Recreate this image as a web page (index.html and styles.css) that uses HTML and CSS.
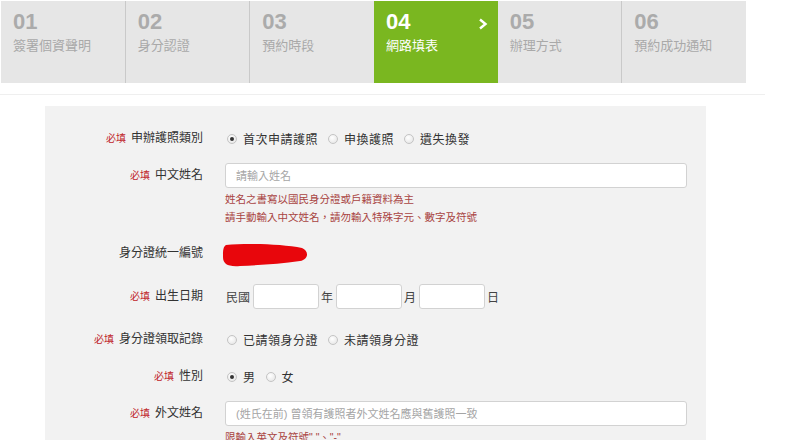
FILE: index.html
```html
<!DOCTYPE html>
<html lang="zh-Hant">
<head>
    <meta charset="UTF-8">
    <meta name="viewport" content="width=device-width, initial-scale=1.0">
    <title>網路填表</title>
    <link rel="stylesheet" href="styles.css">
</head>
<body>

    <div class="steps">
        <div class="step">
            <div class="step-no">01</div>
            <div class="step-name">簽署個資聲明</div>
        </div>
        <div class="step">
            <div class="step-no">02</div>
            <div class="step-name">身分認證</div>
        </div>
        <div class="step">
            <div class="step-no">03</div>
            <div class="step-name">預約時段</div>
        </div>
        <div class="step active">
            <div class="step-no">04</div>
            <div class="step-name">網路填表</div>
            <svg class="step-arrow" width="10" height="12" viewBox="0 0 10 12">
                <polyline points="2,1.5 7.5,6 2,10.5" fill="none" stroke="#fff" stroke-width="2.4"/>
            </svg>
        </div>
        <div class="step">
            <div class="step-no">05</div>
            <div class="step-name">辦理方式</div>
        </div>
        <div class="step">
            <div class="step-no">06</div>
            <div class="step-name">預約成功通知</div>
        </div>
    </div>

    <div class="divider"></div>

    <div class="panel">
        <div class="row">
            <div class="label"><span class="req">必填</span>申辦護照類別</div>
            <div class="field">
                <span class="radio checked"></span><span class="opt">首次申請護照</span>
                <span class="radio"></span><span class="opt">申換護照</span>
                <span class="radio"></span><span class="opt">遺失換發</span>
            </div>
        </div>

        <div class="row top with-hint">
            <div class="label label-input"><span class="req">必填</span>中文姓名</div>
            <div class="field-col">
                <input class="text-input" type="text" placeholder="請輸入姓名">
                <div class="hint">姓名之書寫以國民身分證或戶籍資料為主</div>
                <div class="hint">請手動輸入中文姓名，請勿輸入特殊字元、數字及符號</div>
            </div>
        </div>

        <div class="row wide">
            <div class="label">身分證統一編號</div>
            <div class="field">
                <!-- masked id number -->
                <svg class="blot" width="86" height="24" viewBox="0 0 86 24">
                    <path d="M4 2 C 25 0, 60 1, 80 5 C 87 8, 87 16, 78 18 C 58 21, 38 22, 18 23 C 6 24, 1 21, 1 14 C 1 8, 1 4, 4 2 Z" fill="#e8060c"/>
                </svg>
            </div>
        </div>

        <div class="row wide">
            <div class="label"><span class="req">必填</span>出生日期</div>
            <div class="field">
                <span class="unit first">民國</span>
                <input class="date-input" type="text">
                <span class="unit">年</span>
                <input class="date-input" type="text">
                <span class="unit">月</span>
                <input class="date-input" type="text">
                <span class="unit">日</span>
            </div>
        </div>

        <div class="row">
            <div class="label"><span class="req">必填</span>身分證領取記錄</div>
            <div class="field">
                <span class="radio"></span><span class="opt">已請領身分證</span>
                <span class="radio"></span><span class="opt">未請領身分證</span>
            </div>
        </div>

        <div class="row">
            <div class="label"><span class="req">必填</span>性別</div>
            <div class="field">
                <span class="radio checked"></span><span class="opt">男</span>
                <span class="radio"></span><span class="opt">女</span>
            </div>
        </div>

        <div class="row top">
            <div class="label label-input"><span class="req">必填</span>外文姓名</div>
            <div class="field-col">
                <input class="text-input" type="text" placeholder="(姓氏在前) 曾領有護照者外文姓名應與舊護照一致">
                <div class="hint">限輸入英文及符號" "、"-"</div>
            </div>
        </div>
    </div>

</body>
</html>
```

FILE: styles.css
```css
body {
    margin: 0;
    padding: 0;
    background-color: #fff;
    font-family: "Liberation Sans", "Noto Sans CJK TC", sans-serif;
    color: #333;
}
.steps {
    display: flex;
    width: 745px;
    margin: 1px 0 0 1px;
}
.step {
    position: relative;
    flex: 1;
    height: 82px;
    padding: 10px 0 0 12px;
    box-sizing: border-box;
    background-color: #e6e6e6;
    border-left: 1px solid #c9c9c9;
}
.step:first-child,
.step.active,
.step.active + .step {
    border-left: none;
}
.step-no {
    font-size: 22px;
    line-height: 22px;
    font-weight: bold;
    color: #ababab;
}
.step-name {
    margin-top: 4px;
    font-size: 13px;
    line-height: 18px;
    color: #a9a9a9;
}
.step.active {
    background-color: #7ab720;
}
.step.active .step-no,
.step.active .step-name {
    color: #fff;
}
.step-arrow {
    position: absolute;
    top: 17px;
    right: 10px;
}
.divider {
    width: 765px;
    height: 1px;
    margin-top: 11px;
    background-color: #efefef;
}
.panel {
    width: 661px;
    height: 360px;
    margin: 11px 0 0 45px;
    padding-top: 20px;
    box-sizing: border-box;
    background-color: #f2f2f2;
}
.row {
    display: flex;
    align-items: center;
    margin-bottom: 12px;
}
.row.top {
    align-items: flex-start;
}
.row.wide {
    margin-bottom: 18px;
}
.row.with-hint {
    margin-bottom: 15px;
}
.label {
    width: 158px;
    flex-shrink: 0;
    text-align: right;
    font-size: 12px;
    line-height: 25px;
    color: #333;
}
.req {
    font-size: 10px;
    color: #c0262b;
    margin-right: 5px;
}
.field {
    display: flex;
    align-items: center;
    height: 25px;
    margin-left: 22px;
    font-size: 12px;
}
.field-col {
    margin-left: 22px;
}
.radio {
    width: 8px;
    height: 8px;
    border: 1px solid #c4c4c4;
    border-radius: 50%;
    background: radial-gradient(circle at 40% 35%, #fff, #e2e2e2);
    margin: 0 6px 0 2px;
    display: flex;
    align-items: center;
    justify-content: center;
}
.radio.checked::after {
    content: "";
    width: 4px;
    height: 4px;
    border-radius: 50%;
    background-color: #333;
}
.opt {
    margin-right: 8px;
    letter-spacing: 0.5px;
    color: #333;
}
.text-input {
    display: block;
    width: 462px;
    height: 25px;
    box-sizing: border-box;
    padding: 0 10px;
    border: 1px solid #d2d2d2;
    border-radius: 3px;
    background-color: #fff;
    font-family: "Liberation Sans", "Noto Sans CJK TC", sans-serif;
    font-size: 11px;
}
.text-input::placeholder {
    color: #a5a5a5;
}
.hint {
    font-size: 10.5px;
    line-height: 18px;
    color: #a94442;
}
.hint:first-of-type {
    margin-top: 2px;
}
.blot {
    margin-left: -3px;
    margin-top: 2px;
}
.unit {
    margin: 0 3px 0 2px;
    color: #444;
}
.unit.first {
    margin-left: 1px;
}
.date-input {
    width: 66px;
    height: 25px;
    box-sizing: border-box;
    border: 1px solid #d2d2d2;
    border-radius: 3px;
    background-color: #fff;
}
```
